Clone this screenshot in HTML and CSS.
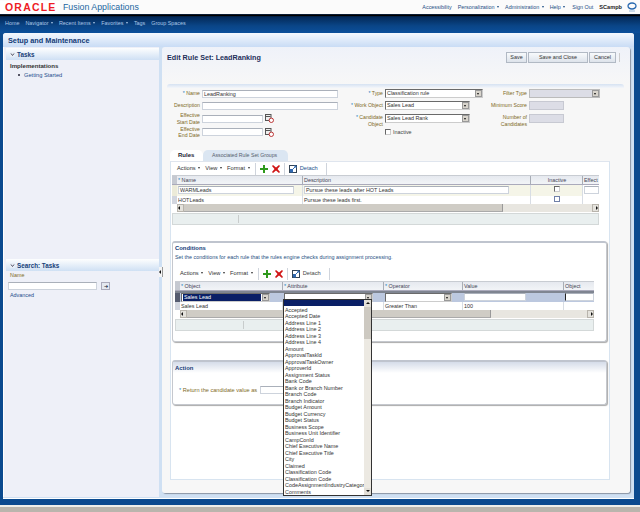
FILE: index.html
```html
<!DOCTYPE html>
<html lang="en">
<head>
<meta charset="utf-8">
<title>Edit Rule Set: LeadRanking</title>
<link rel="stylesheet" href="styles.css">
</head>
<body>
<header class="brand">
  <div class="logo"><span class="oracle">ORACLE</span><span class="fusion">Fusion Applications</span></div>
  <nav class="global">
    <a>Accessibility</a><a>Personalization <i class="caret"></i></a><a>Administration <i class="caret"></i></a><a>Help <i class="caret"></i></a><a>Sign Out</a><b>SCampb</b>
    <svg class="ring" viewBox="0 0 10 11"><ellipse cx="5" cy="4" rx="4" ry="3" fill="none" stroke="#2a6ab0" stroke-width="1.3"/><path d="M2 9h6" stroke="#9ab8d8"/></svg>
  </nav>
</header>
<nav class="mainnav">
  <a>Home</a><a>Navigator <i class="caret"></i></a><a>Recent Items <i class="caret"></i></a><a>Favorites <i class="caret"></i></a><a>Tags</a><a>Group Spaces</a>
</nav>
<main class="shell">
  <h1 class="shell-title">Setup and Maintenance</h1>
  <div class="columns">
    <aside class="side">
      <section class="side-top">
        <h2 class="side-head"><svg class="disc" viewBox="0 0 5 5"><rect width="5" height="5" fill="#e8eef6"/><path d="M1 1.500 2.500 3.500 4 1.500" fill="none" stroke="#556"/></svg>Tasks</h2>
        <h3 class="impl">Implementations</h3>
        <p class="bullet"><a>Getting Started</a></p>
      </section>
      <section class="side-bottom">
        <h2 class="side-head"><svg class="disc" viewBox="0 0 5 5"><rect width="5" height="5" fill="#e8eef6"/><path d="M1 1.500 2.500 3.500 4 1.500" fill="none" stroke="#556"/></svg>Search: Tasks</h2>
        <label class="lbl search-label">Name</label>
        <div class="search-row"><span class="input search-input"></span><span class="go">➜</span></div>
        <a class="advanced">Advanced</a>
      </section>
      <span class="handle"></span>
    </aside>
    <div class="content">
      <div class="page-head">
        <h2 class="page-title">Edit Rule Set: LeadRanking</h2>
        <div class="actions"><span class="btn save">Save</span><span class="btn wide">Save and Close</span><span class="btn cancel">Cancel</span><span class="btn-sep"></span></div>
      </div>
      <div class="form-band"></div>
      <div class="form">
        <div class="col col-a">
          <div class="fr r-a"><label class="lbl"><em>*</em> Name</label><span class="input w135">LeadRanking</span></div>
          <div class="fr r-b"><label class="lbl">Description</label><span class="input w135"></span></div>
          <div class="fr r-c"><label class="lbl">Effective<br>Start Date</label><span class="input w61"></span><svg class="cal" viewBox="0 0 9 9"><rect x=".5" y=".5" width="5.500" height="6" fill="#eee" stroke="#555"/><path d="M1 2.500h4.500" stroke="#555"/><circle cx="6.300" cy="6.300" r="2.200" fill="#fff" stroke="#b33"/></svg></div>
          <div class="fr r-d"><label class="lbl">Effective<br>End Date</label><span class="input w61"></span><svg class="cal" viewBox="0 0 9 9"><rect x=".5" y=".5" width="5.500" height="6" fill="#eee" stroke="#555"/><path d="M1 2.500h4.500" stroke="#555"/><circle cx="6.300" cy="6.300" r="2.200" fill="#fff" stroke="#b33"/></svg></div>
        </div>
        <div class="col col-b">
          <div class="fr r-a"><label class="lbl"><em>*</em> Type</label><span class="select w98">Classification rule<i class="drop"></i></span></div>
          <div class="fr r-b"><label class="lbl"><em>*</em> Work Object</label><span class="select w85">Sales Lead<i class="drop"></i></span></div>
          <div class="fr r-c"><label class="lbl low"><em>*</em> Candidate<br>Object</label><span class="select w85">Sales Lead Rank<i class="drop"></i></span></div>
          <div class="fr r-d"><label class="lbl"></label><span class="check"></span><span class="plain">Inactive</span></div>
        </div>
        <div class="col col-c">
          <div class="fr r-a"><label class="lbl">Filter Type</label><span class="select off w71"><i class="drop"></i></span></div>
          <div class="fr r-b"><label class="lbl">Minimum Score</label><span class="input off w35"></span></div>
          <div class="fr r-c"><label class="lbl low">Number of<br>Candidates</label><span class="input off w35"></span></div>
        </div>
      </div>

      <div class="tabs"><span class="tab on">Rules</span><span class="tab">Associated Rule Set Groups</span></div>
      <div class="tabbody">
        <div class="toolbar">
          <a>Actions <i class="caret dark"></i></a><a>View <i class="caret dark"></i></a><a>Format <i class="caret dark"></i></a>
          <span class="tsep"></span>
          <svg class="ico" viewBox="0 0 8 8"><path d="M3 0h2v3h3v2H5v3H3V5H0V3h3z" fill="#2f9a1c"/></svg>
          <svg class="ico" viewBox="0 0 8 8"><path d="M1 0l3 2.500L7 0l1 1-2.500 3L8 7 7 8 4 5.500 1 8 0 7l2.500-3L0 1z" fill="#d01616"/></svg>
          <span class="tsep"></span>
          <svg class="ico det" viewBox="0 0 8 8"><rect x=".5" y=".5" width="7" height="7" fill="#fff" stroke="#345"/><rect x="1" y="4" width="3" height="3.500" fill="#2f68b0"/><path d="M3.500 4.500 7 1M5 1h2v2" stroke="#2f68b0" fill="none"/></svg><a class="link">Detach</a>
          <span class="tsep"></span>
        </div>
        <div class="grid rules">
          <div class="row head"><span class="m"></span><span class="c r1"><em>*</em> Name</span><span class="c r2">Description</span><span class="c r3 ctr">Inactive</span><span class="c r4">Effect</span></div>
          <div class="row sel-y"><span class="m"></span><span class="c r1"><span class="input w116">WARMLeads</span></span><span class="c r2"><span class="input w206">Pursue these leads after HOT Leads</span></span><span class="c r3 ctr"><span class="check"></span></span><span class="c r4"><span class="input fill"></span></span></div>
          <div class="row plainrow"><span class="m mark"></span><span class="c r1">HOTLeads</span><span class="c r2">Pursue these leads first.</span><span class="c r3 ctr"><span class="check blue"></span></span><span class="c r4"></span></div>
          <div class="hscroll"><span class="arrow left"></span><span class="thumb t-rules"></span><span class="arrow right"></span></div>
          <div class="gridfoot"><span class="cell-a"></span></div>
        </div>

        <section class="box conditions">
          <h3 class="box-title">Conditions</h3>
          <p class="box-help">Set the conditions for each rule that the rules engine checks during assignment processing.</p>
          <div class="toolbar t2">
            <a>Actions <i class="caret dark"></i></a><a>View <i class="caret dark"></i></a><a>Format <i class="caret dark"></i></a>
            <span class="tsep"></span>
            <svg class="ico" viewBox="0 0 8 8"><path d="M3 0h2v3h3v2H5v3H3V5H0V3h3z" fill="#2f9a1c"/></svg>
            <svg class="ico" viewBox="0 0 8 8"><path d="M1 0l3 2.500L7 0l1 1-2.500 3L8 7 7 8 4 5.500 1 8 0 7l2.500-3L0 1z" fill="#d01616"/></svg>
            <span class="tsep"></span>
            <svg class="ico det" viewBox="0 0 8 8"><rect x=".5" y=".5" width="7" height="7" fill="#fff" stroke="#345"/><rect x="1" y="4" width="3" height="3.500" fill="#2f68b0"/><path d="M3.500 4.500 7 1M5 1h2v2" stroke="#2f68b0" fill="none"/></svg><a class="link dim">Detach</a>
            <span class="tsep"></span>
          </div>
          <div class="grid conds">
            <div class="row head"><span class="m"></span><span class="c k1"><em>*</em> Object</span><span class="c k2"><em>*</em> Attribute</span><span class="c k3"><em>*</em> Operator</span><span class="c k4">Value</span><span class="c k5">Object</span></div>
            <div class="row sel-b"><span class="m mark dark"></span><span class="c k1"><span class="select w88 hl"><span class="selected">Sales Lead</span><i class="drop"></i></span></span><span class="c k2"><span class="select w88"><i class="drop"></i></span></span><span class="c k3"><span class="select w68"><i class="drop"></i></span></span><span class="c k4"><span class="input w62"></span></span><span class="c k5"><span class="input fill hardleft"></span></span></div>
            <div class="row plainrow"><span class="m mark"></span><span class="c k1">Sales Lead</span><span class="c k2"></span><span class="c k3">Greater Than</span><span class="c k4">100</span><span class="c k5"></span></div>
            <div class="hscroll"><span class="arrow left"></span><span class="thumb t-conds"></span><span class="arrow right"></span></div>
            <div class="gridfoot"><span class="cell-a c2"></span></div>
          </div>
        </section>

        <section class="box action">
          <h3 class="box-title band">Action</h3>
          <div class="return"><label class="lbl"><em>*</em> Return the candidate value as</label><span class="input w40"></span></div>
        </section>
      </div>

      <div class="listbox">
        <div class="list-items">
          <div class="opt first"></div>
          <div class="opt gap"></div>
          <div class="opt">Accepted</div><div class="opt">Accepted Date</div><div class="opt">Address Line 1</div><div class="opt">Address Line 2</div><div class="opt">Address Line 3</div><div class="opt">Address Line 4</div><div class="opt">Amount</div><div class="opt">ApprovalTaskId</div><div class="opt">ApprovalTaskOwner</div><div class="opt">ApproverId</div><div class="opt">Assignment Status</div><div class="opt">Bank Code</div><div class="opt">Bank or Branch Number</div><div class="opt">Branch Code</div><div class="opt">Branch Indicator</div><div class="opt">Budget Amount</div><div class="opt">Budget Currency</div><div class="opt">Budget Status</div><div class="opt">Business Scope</div><div class="opt">Business Unit Identifier</div><div class="opt">CampConId</div><div class="opt">Chief Executive Name</div><div class="opt">Chief Executive Title</div><div class="opt">City</div><div class="opt">Claimed</div><div class="opt">Classification Code</div><div class="opt">Classification Code</div><div class="opt">CodeAssignmentIndustryCategor</div><div class="opt">Comments</div>
        </div>
        <div class="vscroll"><span class="varrow up"></span><span class="vthumb"></span><span class="vtrack"></span><span class="varrow down"></span></div>
      </div>
    </div>
  </div>
</main>
<footer class="bottom"></footer>
</body>
</html>
```
FILE: styles.css
```css
* { box-sizing: border-box; }
html, body { margin: 0; padding: 0; }
body { width: 640px; height: 512px; overflow: hidden; background: #0b4a8f; font: 5.4px/6.5px "Liberation Sans", Arial, sans-serif; color: #333; position: relative; }
h1, h2, h3, p { margin: 0; }
em { font-style: normal; color: #1b7bbd; }
i { font-style: normal; }

.brand { height: 15px; background: #fbfbfb; display: flex; justify-content: space-between; align-items: center; box-shadow: 0 1px 1px #000; border-bottom: 1px solid #0a1a30; position: relative; }
.logo { display: flex; align-items: center; height: 15px; }
.oracle { background: #fff; color: #ee1c25; font: bold 10.5px/13px "Liberation Sans", Arial, sans-serif; letter-spacing: 1.2px; width: 60px; padding-left: 5px; }
.fusion { color: #23669f; font: 8.8px/13px "Liberation Sans", Arial, sans-serif; margin-left: 3px; }
.global { display: flex; align-items: center; gap: 6px; color: #1d4d84; padding-right: 3px; }
.global a:nth-child(4) { margin-right: 1px; }
.global b { color: #222; font-size: 5.6px; }
.ring { width: 10px; height: 11px; margin-left: -1px; }
.caret { display: inline-block; width: 0; height: 0; border: 1.5px solid transparent; border-top: 2px solid currentColor; border-bottom: 0; vertical-align: 1px; margin-left: 1px; }
.caret.dark { color: #333; }

.mainnav { height: 18px; padding: 5px 0 0 5px; display: flex; gap: 6px; align-items: flex-start; color: #a9c6e6; background: linear-gradient(#02234e, #0a4587 60%, #0b4f9b); }

.shell { position: absolute; left: 3px; top: 33px; width: 631px; height: 465px; background: #cfe0f3; border-radius: 3px 3px 0 0; box-shadow: 0 1px 0 #fff; }
.shell-title { height: 14px; padding: 3px 0 0 5px; font: bold 7.3px/9px "Liberation Sans", Arial, sans-serif; color: #123a76; background: linear-gradient(#f4f8fe, #c9dcf5); border-radius: 3px 3px 0 0; }
.columns { display: flex; align-items: flex-start; height: 451px; }

.side { width: 156px; height: 450px; padding-left: 3px; position: relative; display: flex; flex-direction: column; background: #eef0f8; border-left: 1px solid #fff; }
.side-top { height: 211px; flex: none; }
.side-bottom { flex: 1; }
.side-head { height: 12px; margin: 1px 0 0 -1px; background: linear-gradient(#fdfefe, #cfe0f4); font: bold 6.3px/11px "Liberation Sans", Arial, sans-serif; color: #163e78; display: flex; align-items: center; padding-left: 4px; gap: 2px; }
.disc { width: 5px; height: 5px; flex: none; }
.impl { font: bold 6.1px/8px "Liberation Sans", Arial, sans-serif; color: #333; padding: 2px 0 0 3px; }
.bullet { margin-top: 2px; padding-left: 17px; color: #1d4d8c; position: relative; font-size: 5.7px; }
.bullet::before { content: ""; position: absolute; left: 11px; top: 2px; width: 2px; height: 2px; background: #223; border-radius: 50%; }
.lbl { color: #806a1e; text-align: right; display: block; flex: none; font-size: 5.2px; }
.search-label { text-align: left; margin: 1px 0 0 3px; font-size: 5.4px; }
.search-row { display: flex; align-items: center; gap: 4px; margin: 3px 0 0 1px; }
.search-input { width: 89px; height: 8px; }
.go { width: 9px; height: 8px; background: #e4e8f0; border: 1px solid #aab; font-size: 5px; line-height: 6px; text-align: center; color: #123; }
.advanced { display: block; margin: 2px 0 0 3px; color: #1d4d8c; }
.handle { position: absolute; right: -4px; top: 220px; width: 4px; height: 10px; background: #f5f5f5; border-right: 1px solid #999; z-index: 2; }
.handle::after { content: ""; position: absolute; left: 0; top: 3px; border: 2px solid transparent; border-right: 2px solid #111; border-left: 0; }

.content { width: 468px; height: 446px; margin-left: 3px; background: linear-gradient(#eff2f9, #f7f7f7 37px); position: relative; padding-left: 5px; border-radius: 3px; box-shadow: 1px 1px 1px #8a94a4; }
.page-head { height: 37px; display: flex; justify-content: space-between; padding: 5px 10px 0 0; }
.page-title { font: bold 7.2px/9px "Liberation Sans", Arial, sans-serif; color: #1d2f5a; padding-top: 1px; }
.actions { display: flex; gap: 1px; align-items: center; height: 11px; }
.btn { height: 11px; text-align: center; line-height: 9px; background: linear-gradient(#f8fafc, #dde3eb); border: 1px solid #b1b9c4; color: #333; }
.btn.save { width: 21px; }
.btn.wide { width: 60px; }
.btn.cancel { width: 27px; }
.btn-sep { width: 1px; height: 9px; background: #ccc; margin-left: 2px; }
.form-band { height: 4px; background: linear-gradient(#d6e2f2, #f4f6fa); margin-right: 6px; border-radius: 3px 3px 0 0; }

.form { display: flex; height: 62px; }
.col { display: flex; flex-direction: column; flex: none; }
.col-a { width: 172px; }
.col-b { width: 142px; }
.col-a .lbl { width: 33px; }
.col-b .lbl { width: 44px; }
.col-c .lbl { width: 46px; }
.fr { display: flex; align-items: center; gap: 2px; }
.r-a { height: 11px; }
.r-b { height: 13px; }
.r-c { height: 13px; }
.r-d { height: 14px; }
.low { position: relative; top: 2px; }
.input { display: inline-block; flex: none; height: 8px; background: #fff; border: 1px solid #cdd3dc; border-top-color: #aab0ba; line-height: 6px; padding-left: 1px; color: #333; white-space: nowrap; overflow: hidden; }
.input.off { background: #dcdde6; border-color: #c7c9d2; }
.w135 { width: 136px; }
.w61 { width: 61px; }
.w35 { width: 35px; height: 9px; }
.w116 { width: 116px; }
.w206 { width: 205px; }
.w62 { width: 62px; }
.w40 { width: 24px; }
.fill { width: 100%; }
.hardleft { border-left: 1px solid #222; }
.select { display: inline-flex; flex: none; align-items: center; height: 9px; border: 1px solid #6a6a6a; border-right-color: #ccc; border-bottom-color: #ccc; background: #fff; padding-left: 1px; line-height: 7px; }
.select.off { background: #dcdde6; border-color: #bbb; padding: 0; }
.w98 { width: 98px; }
.w85 { width: 85px; }
.w71 { width: 71px; }
.w88 { width: 89px; }
.w68 { width: 67px; }
.drop { width: 7px; height: 7px; margin-left: auto; background: #d8d4cc; border: 1px solid #999; position: relative; flex: none; }
.drop::after { content: ""; position: absolute; left: 1px; top: 2px; border: 1.5px solid transparent; border-top: 2px solid #111; border-bottom: 0; }
.cal { width: 9px; height: 9px; flex: none; }
.check { display: inline-block; flex: none; width: 6px; height: 6px; background: #fff; border: 1px solid #666; border-bottom-color: #ccc; border-right-color: #ccc; }
.check.blue { border: 1px solid #7080a8; }
.plain { color: #444; }

.tabs { display: flex; height: 11px; margin-left: 3px; align-items: flex-end; }
.tab { height: 11px; line-height: 10px; background: #dbe6f2; color: #55606e; border-radius: 5px 5px 0 0; font-size: 5.2px; }
.tab.on { background: #fff; color: #223; font-weight: bold; width: 33px; padding-left: 8px; font-size: 6px; }
.tab:not(.on) { width: 85px; padding-left: 9px; }
.tabbody { width: 440px; height: 319px; margin-left: 3px; background: #fff; border: 1px solid #d8e4f0; border-top-color: #dfe5ee; padding: 0 0 0 1px; }
.toolbar { height: 13px; display: flex; align-items: center; gap: 4px; padding-left: 5px; color: #333; font-size: 5.7px; }
.toolbar a { margin-right: 1px; white-space: nowrap; }
.toolbar.t2 { height: 14px; padding-left: 6px; margin-top: 6px; }
.tsep { width: 1px; height: 12px; background: #cfd4dc; flex: none; }
.ico { width: 8px; height: 8px; flex: none; }
.det { margin-right: -1px; }
.link { color: #24508c; }
.toolbar .link { margin-right: 4px; }
.link.dim { color: #444; }

.grid { background: #fff; }
.rules { width: 427px; }
.conds { width: 419px; margin-left: 1px; }
.row { display: flex; }
.head { height: 10px; background: linear-gradient(#e6e9ef, #f2f4f7); border-top: 1px solid #c8ccd2; border-bottom: 1px solid #aab; line-height: 8px; color: #445; }
.c { border-right: 1px solid #d8dde4; padding-left: 1px; white-space: nowrap; overflow: hidden; flex: none; }
.head .c { border-right-color: #a8adb6; }
.m { width: 5px; flex: none; }
.head .m { background: #c5c9d1; }
.mark { background: #d2d6df; }
.mark.dark { background: #555c70; }
.r1 { width: 126px; } .r2 { width: 228px; } .r3 { width: 52px; } .r4 { width: 16px; border-right: 0; }
.k1 { width: 103px; } .k2 { width: 101px; } .k3 { width: 79px; } .k4 { width: 101px; } .k5 { width: 30px; border-right: 0; }
.ctr { text-align: center; }
.sel-y { height: 11px; background: #f5f5e8; align-items: center; }
.sel-y .m { height: 11px; background: #ecebd9; }
.sel-y .c { line-height: 9px; height: 11px; padding-top: 1px; }
.sel-y .r4 { background: #fff; }
.sel-b { height: 11px; background: #bcc8df; border-top: 2px solid #7f8591; align-items: center; }
.sel-b .m { height: 9px; }
.sel-b .c { height: 9px; border-right: 0; padding-left: 1px; }
.plainrow { height: 8px; line-height: 8px; color: #333; background: #fff; }
.hscroll { height: 8px; margin-left: 5px; background: #e8e6e0; display: flex; position: relative; justify-content: space-between; }
.arrow { width: 7px; height: 8px; background: #e4e2dc; border: 1px solid #b8b4ac; position: relative; z-index: 1; }
.arrow::after { content: ""; position: absolute; top: 1px; border: 2px solid transparent; }
.arrow.left::after { left: 0; border-right: 2px solid #111; border-left: 0; }
.arrow.right::after { right: 0; border-left: 2px solid #111; border-right: 0; }
.thumb { position: absolute; left: 7px; top: 0; height: 8px; background: #cfccc5; border-right: 1px solid #999; border-bottom: 1px solid #aaa; }
.t-rules { width: 319px; }
.t-conds { width: 304px; }
.gridfoot { height: 12px; background: #e9efef; border: 1px solid #d3d8d8; display: flex; margin-top: 1px; }
.cell-a { width: 66px; border-right: 1px solid #c8cccc; margin: 1px 0; }
.cell-a.c2 { width: 68px; }

.box { width: 435px; background: #fff; border: 1px solid #c5c8ce; border-top: 2px solid #bfc4ce; border-radius: 3px; box-shadow: 1px 1px 1px #aaa; }
.conditions { height: 101px; margin-top: 16px; padding: 1px 0 0 1px; }
.box-title { font: bold 5.9px/8px "Liberation Sans", Arial, sans-serif; color: #123a76; padding: 0 0 0 1px; }
.box-help { color: #1f4f7f; margin: 2px 0 0 1px; }
.action { height: 45px; margin-top: 18px; }
.box-title.band { height: 11px; padding: 2px 0 0 2px; background: linear-gradient(#d5dce9, #fff); }
.return { display: flex; align-items: center; gap: 3px; margin: 13px 0 0 6px; }
.return .lbl { font-size: 5.6px; }

.listbox { position: absolute; left: 121px; top: 252px; width: 89px; height: 197px; background: #fff; border: 1px solid #333; display: flex; z-index: 5; }
.list-items { flex: 1; overflow: hidden; }
.opt { height: 6.5px; line-height: 6.5px; color: #333; white-space: nowrap; overflow: hidden; padding-left: 1px; }
.opt.first { height: 6px; background: #0a1f66; }
.opt.gap { height: 0.5px; }
.vscroll { width: 7px; flex: none; display: flex; flex-direction: column; background: #ece9e2; }
.varrow { height: 7px; background: #e2dfd8; position: relative; flex: none; }
.varrow::after { content: ""; position: absolute; left: 1.5px; top: 2px; border: 2px solid transparent; }
.varrow.up::after { border-bottom: 2px solid #111; border-top: 0; }
.varrow.down::after { border-top: 2px solid #111; border-bottom: 0; }
.vthumb { height: 32px; background: #cdc9c1; flex: none; }
.vtrack { flex: 1; }
.selected { background: #0a1f66; color: #fff; padding: 0 1px; flex: 1; margin-right: 1px; }

.bottom { position: absolute; left: 0; right: 0; bottom: 0; height: 7px; background: #b9b5ad; border-top: 2px solid #eeeeea; }
```
